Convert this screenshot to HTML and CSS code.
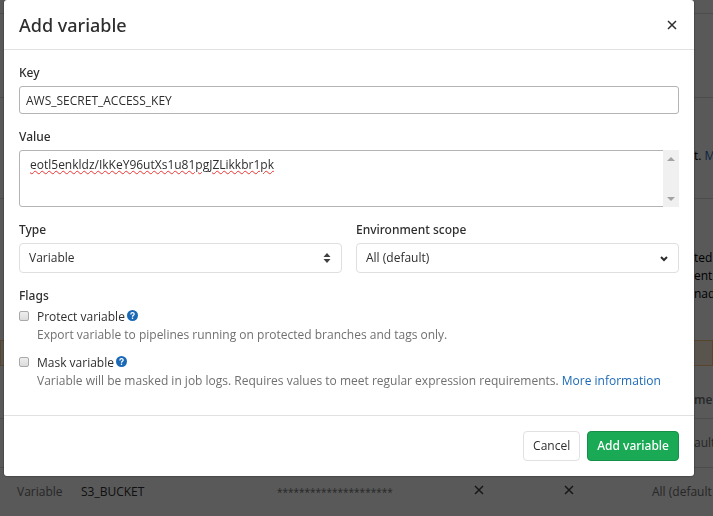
FILE: index.html
```html
<!DOCTYPE html>
<html lang="en">
<head>
<meta charset="utf-8">
<title>Add variable</title>
<link rel="stylesheet" href="styles.css">
</head>
<body>
<main class="page" aria-hidden="true">
  <section class="section section-top"></section>
  <section class="section section-runners"></section>
  <section class="section section-artifacts"><p class="edge-text">t. <a href="#" tabindex="-1">M</a></p></section>
  <section class="section-variables">
    <p class="edge-text">ted</p>
    <p class="edge-text">ents</p>
    <p class="edge-text">nad</p>
    <div class="alert"></div>
    <table class="variables">
      <colgroup><col class="col-type"><col class="col-key"><col class="col-value"><col class="col-protected"><col class="col-masked"><col class="col-scope"></colgroup>
      <thead><tr><th></th><th></th><th></th><th></th><th></th><th class="tail">me</th></tr></thead>
      <tbody>
        <tr><td></td><td></td><td></td><td></td><td></td><td class="tail">ault</td></tr>
        <tr>
          <td>Variable</td><td class="name">S3_BUCKET</td><td class="masked">*********************</td>
          <td><svg class="cross" viewBox="0 0 10 10"><path d="M1 1l8 8M9 1l-8 8"/></svg></td>
          <td><svg class="cross" viewBox="0 0 10 10"><path d="M1 1l8 8M9 1l-8 8"/></svg></td>
          <td>All (default</td>
        </tr>
      </tbody>
    </table>
  </section>
</main>

<div class="backdrop">
  <form class="modal" role="dialog" aria-modal="true" aria-labelledby="modal-title">
    <header class="modal-header">
      <h2 id="modal-title">Add variable</h2>
      <button class="close" type="button" aria-label="Close"><svg class="cross" viewBox="0 0 10 10"><path d="M1 1l8 8M9 1l-8 8"/></svg></button>
    </header>
    <div class="modal-body">
      <div class="field">
        <label class="field-label" for="key">Key</label>
        <input class="control key" id="key" type="text" value="AWS_SECRET_ACCESS_KEY">
      </div>
      <div class="field">
        <label class="field-label" for="value">Value</label>
        <div class="textarea-wrap">
          <textarea class="control secret" id="value" spellcheck="false">eotl5enkldz/IkKeY96utXs1u81pgJZLikkbr1pk</textarea>
          <div class="scrollbar" aria-hidden="true">
            <svg viewBox="0 0 8 4"><path d="M0 4l4-4 4 4z"/></svg>
            <svg viewBox="0 0 8 4"><path d="M0 0l4 4 4-4z"/></svg>
          </div>
        </div>
      </div>
      <div class="field-row">
        <div class="field">
          <label class="field-label" for="type">Type</label>
          <div class="select-wrap">
            <select class="control select" id="type"><option>Variable</option></select>
            <svg class="sort" viewBox="0 0 8 10"><path d="M0.5 4L4 0l3.5 4zM0.5 6h7L4 10z"/></svg>
          </div>
        </div>
        <div class="field">
          <label class="field-label" for="scope">Environment scope</label>
          <div class="select-wrap">
            <select class="control select" id="scope"><option>All (default)</option></select>
            <svg class="chevron" viewBox="0 0 8 6"><path d="M1 1l3 3 3-3"/></svg>
          </div>
        </div>
      </div>
      <fieldset class="flags">
        <legend class="field-label">Flags</legend>
        <div class="flag">
          <input type="checkbox" id="protect">
          <div>
            <div class="flag-title"><label for="protect">Protect variable</label>
              <a href="#" aria-label="Help on protected variables"><svg class="help" viewBox="0 0 12 12"><circle cx="6" cy="6" r="6"/><path d="M4.2 4.8C4.2 2.3 7.8 2.4 7.8 4.6 7.8 5.9 6 5.8 6 7.3M6 8.3v1.4"/></svg></a></div>
            <p>Export variable to pipelines running on protected branches and tags only.</p>
          </div>
        </div>
        <div class="flag">
          <input type="checkbox" id="mask">
          <div>
            <div class="flag-title"><label for="mask">Mask variable</label>
              <a href="#" aria-label="Help on masked variables"><svg class="help" viewBox="0 0 12 12"><circle cx="6" cy="6" r="6"/><path d="M4.2 4.8C4.2 2.3 7.8 2.4 7.8 4.6 7.8 5.9 6 5.8 6 7.3M6 8.3v1.4"/></svg></a></div>
            <p>Variable will be masked in job logs. Requires values to meet regular expression requirements. <a href="#">More information</a></p>
          </div>
        </div>
      </fieldset>
    </div>
    <footer class="modal-footer">
      <button class="btn" type="button">Cancel</button>
      <button class="btn btn-success" type="submit">Add variable</button>
    </footer>
  </form>
</div>
</body>
</html>
```
FILE: styles.css
```css
* { box-sizing: border-box; }

body {
  margin: 0;
  overflow: hidden;
  background: #fff;
  color: #2e2e2e;
  font-family: "Open Sans", "Noto Sans", sans-serif;
  font-size: 12px;
  line-height: 18px;
}

h2, p { margin: 0; }
a { color: #1b69b6; text-decoration: none; }
button, input, select, textarea { font: inherit; color: inherit; }

.cross {
  display: block;
  width: 10px;
  height: 10px;
  fill: none;
  stroke: currentColor;
  stroke-width: 1.5;
}

/* Settings page behind the dialog */
.page { overflow: hidden; }
.section { border-bottom: 1px solid #dbdbdb; }
.section-top { height: 14px; }
.section-runners { height: 84px; }
.section-artifacts { height: 101px; padding-top: 49px; }
.section-variables { padding-top: 50px; }
.edge-text { margin-left: calc(100% - 19px); white-space: nowrap; color: #000; }
.alert {
  height: 26px;
  margin-top: 37px;
  border: 1px solid #fcc685;
  background: #fff0dd;
}
.variables {
  width: calc(100% + 60px);
  margin-top: 16px;
  border-collapse: collapse;
  table-layout: fixed;
  color: #707070;
}
.variables th, .variables td {
  height: 49px;
  padding: 0;
  border-bottom: 1px solid #dbdbdb;
  text-align: left;
  white-space: nowrap;
}
.variables th { height: 36px; font-weight: 600; }
.variables td:first-child { padding-left: 17px; }
.variables .tail { padding-left: 42px; }
.variables .name { color: #2e2e2e; }
.variables .masked { font-size: 10px; }
.variables .cross { margin-bottom: 4px; color: #444; }
.col-type { width: 81px; }
.col-key { width: 196px; }
.col-value { width: 197px; }
.col-protected { width: 90px; }
.col-masked { width: 88px; }

/* Dialog */
.backdrop {
  position: fixed;
  inset: 0;
  padding: 0 19px 0 4px;
  background: rgba(0, 0, 0, 0.65);
}
.modal {
  border-radius: 3px;
  background: #fff;
  box-shadow: 0 0 2px rgba(0, 0, 0, 0.6);
}
.modal-header {
  display: flex;
  align-items: center;
  justify-content: space-between;
  height: 50px;
  padding: 0 15px;
  border-bottom: 1px solid #e1e1e1;
}
.modal-header h2, .field-label, .btn-success {
  font-family: "Noto Sans", "Open Sans", sans-serif;
  font-weight: 500;
}
.modal-header h2 { font-size: 18px; line-height: 24px; }
.close {
  padding: 2px;
  border: 0;
  background: none;
}
.modal-body { padding: 14px 15px 25px; }
.field { margin-bottom: 14px; }
.field-label {
  display: block;
  margin-bottom: 4px;
  padding: 0;
}
.field-row { display: grid; grid-template-columns: 1fr 1fr; gap: 14px; }

.control {
  display: block;
  width: 100%;
  border: 1px solid #b4b4b4;
  border-radius: 3px;
  background: #fff;
}
.key { height: 28px; padding: 0 6px; }
.textarea-wrap, .select-wrap { position: relative; }
.secret {
  height: 57px;
  padding: 5px 26px 5px 10px;
  resize: none;
  scrollbar-width: none;
  text-decoration: underline wavy #e33 1px;
  text-underline-offset: 1px;
}
.scrollbar {
  position: absolute;
  top: 0;
  right: 0;
  bottom: 0;
  display: flex;
  flex-direction: column;
  justify-content: space-between;
  align-items: center;
  width: 16px;
  padding: 7px 0 6px;
  background: #f0f0f0;
}
.scrollbar svg { width: 8px; height: 4px; fill: #a3a3a3; }
.select {
  height: 30px;
  padding: 0 9px;
  border-color: #dfdfdf;
  border-radius: 4px;
  appearance: none;
}
.sort, .chevron { position: absolute; pointer-events: none; }
.sort { top: 10px; right: 11px; width: 8px; height: 10px; fill: #404040; }
.chevron {
  top: 13px;
  right: 11px;
  width: 8px;
  height: 6px;
  fill: none;
  stroke: #2e2e2e;
  stroke-width: 2;
}

.flags { margin: 0; padding: 0; border: 0; }
.flags > .field-label { margin-bottom: 3px; }
.flag { display: flex; gap: 8px; }
.flag + .flag { margin-top: 10px; }
.flag input {
  flex: none;
  width: 10px;
  height: 10px;
  margin: 3px 0 0;
  border: 1px solid #a9a9a9;
  border-radius: 2px;
  background: linear-gradient(#eee, #dcdcdc);
  appearance: none;
}
.flag p { color: #707070; }
.flag-title { display: flex; gap: 2px; }
.help { display: block; width: 11px; height: 11px; margin-top: 2px; fill: #1b69b6; }
.help path { fill: none; stroke: #fff; stroke-width: 1.4; }

.modal-footer {
  display: flex;
  justify-content: flex-end;
  gap: 7px;
  padding: 15px;
  border-top: 1px solid #e1e1e1;
}
.btn {
  height: 30px;
  padding: 0 9px;
  border: 1px solid #e1e1e1;
  border-radius: 4px;
  background: #fff;
}
.btn-success {
  border-color: #168f48;
  background: #1aaa55;
  color: #fff;
}
```
